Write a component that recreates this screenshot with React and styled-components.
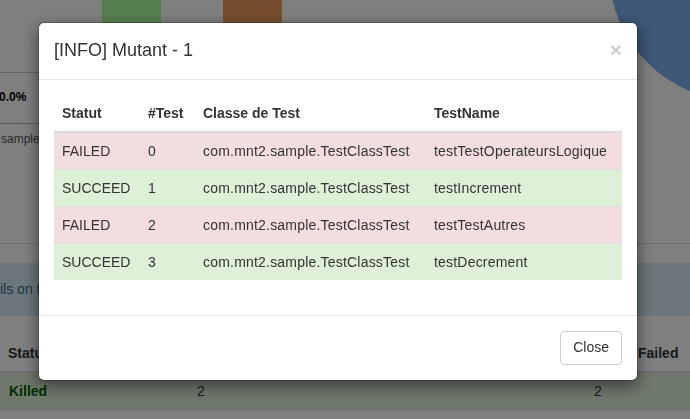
import styled, { createGlobalStyle } from "styled-components";

const GlobalStyle = createGlobalStyle`
  html, body {
    margin: 0;
    padding: 0;
    background: #fff;
    font-family: "Liberation Sans", Arial, sans-serif;
    font-size: 14px;
    line-height: 1.42857;
    color: #333;
  }
  * { box-sizing: border-box; }
`;

const tests = [
  { statut: "FAILED", num: 0, classe: "com.mnt2.sample.TestClassTest", name: "testTestOperateursLogique" },
  { statut: "SUCCEED", num: 1, classe: "com.mnt2.sample.TestClassTest", name: "testIncrement" },
  { statut: "FAILED", num: 2, classe: "com.mnt2.sample.TestClassTest", name: "testTestAutres" },
  { statut: "SUCCEED", num: 3, classe: "com.mnt2.sample.TestClassTest", name: "testDecrement" },
];

function App() {
  return (
    <>
      <GlobalStyle />
      <Page>
        <TopPanel>
          <LeftPanel>
            <BarChart>
              <Bar $left={102} $color="#aaff9e" />
              <Bar $left={62} $color="#ec9c5c" />
            </BarChart>
            <StatsRow>
              <StatValue>0.0%</StatValue>
            </StatsRow>
            <SmallText>sample.</SmallText>
          </LeftPanel>
          <PieBox>
            <svg width="81" height="110" viewBox="0 0 81 110">
              <circle cx="131" cy="-30" r="131" fill="#7cb0ec" />
            </svg>
          </PieBox>
        </TopPanel>

        <InfoBand>ils on the mutants</InfoBand>

        <MutantTable>
          <thead>
            <tr>
              <MutTh $w={189}>Statut</MutTh>
              <MutTh $w={397}></MutTh>
              <MutTh $indent={44}>Failed</MutTh>
            </tr>
          </thead>
          <tbody>
            <tr>
              <MutTd $bg="#dff0d8">
                <Killed>Killed</Killed>
              </MutTd>
              <MutTd $bg="#dff0d8">2</MutTd>
              <MutTd $bg="#dff0d8">2</MutTd>
            </tr>
          </tbody>
        </MutantTable>
      </Page>

      <ModalLayer>
        <Dialog>
          <Header>
            <CloseX type="button">×</CloseX>
            <Title>[INFO] Mutant - 1</Title>
          </Header>
          <Body>
            <TestTable>
              <thead>
                <tr>
                  <Th $w={86}>Statut</Th>
                  <Th $w={55}>#Test</Th>
                  <Th $w={231}>Classe de Test</Th>
                  <Th>TestName</Th>
                </tr>
              </thead>
              <tbody>
                {tests.map((t) => (
                  <Row key={t.num} $failed={t.statut === "FAILED"}>
                    <Td>{t.statut}</Td>
                    <Td>{t.num}</Td>
                    <Td $spaced>{t.classe}</Td>
                    <Td $spaced>{t.name}</Td>
                  </Row>
                ))}
              </tbody>
            </TestTable>
          </Body>
          <Footer>
            <Button type="button">Close</Button>
          </Footer>
        </Dialog>
      </ModalLayer>
    </>
  );
}

export default App;

const Page = styled.div`
  width: 690px;
  overflow: hidden;
`;

const TopPanel = styled.div`
  display: grid;
  grid-template-columns: 609px 81px;
  height: 244px;
  border-bottom: 1px solid #ddd;
`;

const LeftPanel = styled.div`
  display: flex;
  flex-direction: column;
`;

const BarChart = styled.div`
  display: flex;
  align-items: flex-start;
  height: 73px;
  border-bottom: 1px solid #ccc;
`;

const Bar = styled.div`
  margin-left: ${(p) => p.$left}px;
  width: 59px;
  height: 60px;
  background: ${(p) => p.$color};
`;

const StatsRow = styled.div`
  display: flex;
  align-items: center;
  height: 51px;
  border-bottom: 1px solid #bbb;
`;

const StatValue = styled.span`
  font-weight: bold;
  font-size: 12px;
  margin-left: -1px;
  color: #000;
`;

const SmallText = styled.div`
  font-size: 12px;
  color: #555;
  margin-top: 7px;
  margin-left: 1px;
`;

const PieBox = styled.div`
  overflow: hidden;
  height: 110px;
  svg { display: block; }
`;

const InfoBand = styled.div`
  margin-top: 19px;
  height: 53px;
  display: flex;
  align-items: center;
  background: #d9edf7;
  color: #31708f;
  font-size: 14px;
  padding-top: 1px;
`;

const MutantTable = styled.table`
  width: 690px;
  margin-top: 19px;
  border-collapse: collapse;
`;

const MutTh = styled.th`
  text-align: left;
  padding: 8px;
  padding-left: ${(p) => 8 + (p.$indent || 0)}px;
  line-height: 20px;
  font-weight: bold;
  border-bottom: 2px solid #ddd;
  width: ${(p) => (p.$w ? `${p.$w}px` : "auto")};
`;

const MutTd = styled.td`
  padding: 8px;
  line-height: 20px;
  border-bottom: 1px solid #ddd;
  background: ${(p) => p.$bg};
`;

const Killed = styled.span`
  font-weight: bold;
  color: #005a00;
  margin-left: 1px;
`;

const ModalLayer = styled.div`
  position: fixed;
  inset: 0;
  background: rgba(0, 0, 0, 0.5);
  padding-top: 22px;
  padding-left: 38px;
`;

const Dialog = styled.div`
  width: 600px;
  background: #fff;
  border: 1px solid rgba(0, 0, 0, 0.2);
  border-radius: 6px;
  box-shadow: 0 5px 15px rgba(0, 0, 0, 0.5);
  background-clip: padding-box;
`;

const Header = styled.div`
  padding: 15px;
  border-bottom: 1px solid #e5e5e5;
`;

const Title = styled.h4`
  margin: 0;
  font-size: 18px;
  font-weight: 500;
  line-height: 1.42857;
  color: #333;
`;

const CloseX = styled.button`
  float: right;
  margin-top: 1px;
  padding: 0;
  border: 0;
  background: transparent;
  font-family: "Liberation Sans", Arial, sans-serif;
  font-size: 21px;
  font-weight: bold;
  line-height: 1;
  color: #000;
  opacity: 0.2;
  text-shadow: 0 1px 0 #fff;
  cursor: pointer;
`;

const Body = styled.div`
  padding: 15px;
`;

const TestTable = styled.table`
  width: 100%;
  margin-bottom: 20px;
  border-collapse: collapse;
  border-spacing: 0;
`;

const Th = styled.th`
  text-align: left;
  vertical-align: bottom;
  padding: 8px;
  line-height: 20px;
  font-weight: bold;
  border-bottom: 2px solid #ddd;
  width: ${(p) => (p.$w ? `${p.$w}px` : "auto")};
`;

const Row = styled.tr`
  background: ${(p) => (p.$failed ? "#f2dede" : "#dff0d8")};
`;

const Td = styled.td`
  padding: 8px;
  line-height: 20px;
  border-top: 1px solid #ddd;
  white-space: nowrap;
  letter-spacing: ${(p) => (p.$spaced ? "0.2px" : "normal")};
`;

const Footer = styled.div`
  padding: 15px;
  text-align: right;
  border-top: 1px solid #e5e5e5;
`;

const Button = styled.button`
  font-family: "Liberation Sans", Arial, sans-serif;
  font-size: 14px;
  line-height: 1.42857;
  padding: 6px 12px;
  color: #333;
  background: #fff;
  border: 1px solid #ccc;
  border-radius: 4px;
  cursor: pointer;
`;
